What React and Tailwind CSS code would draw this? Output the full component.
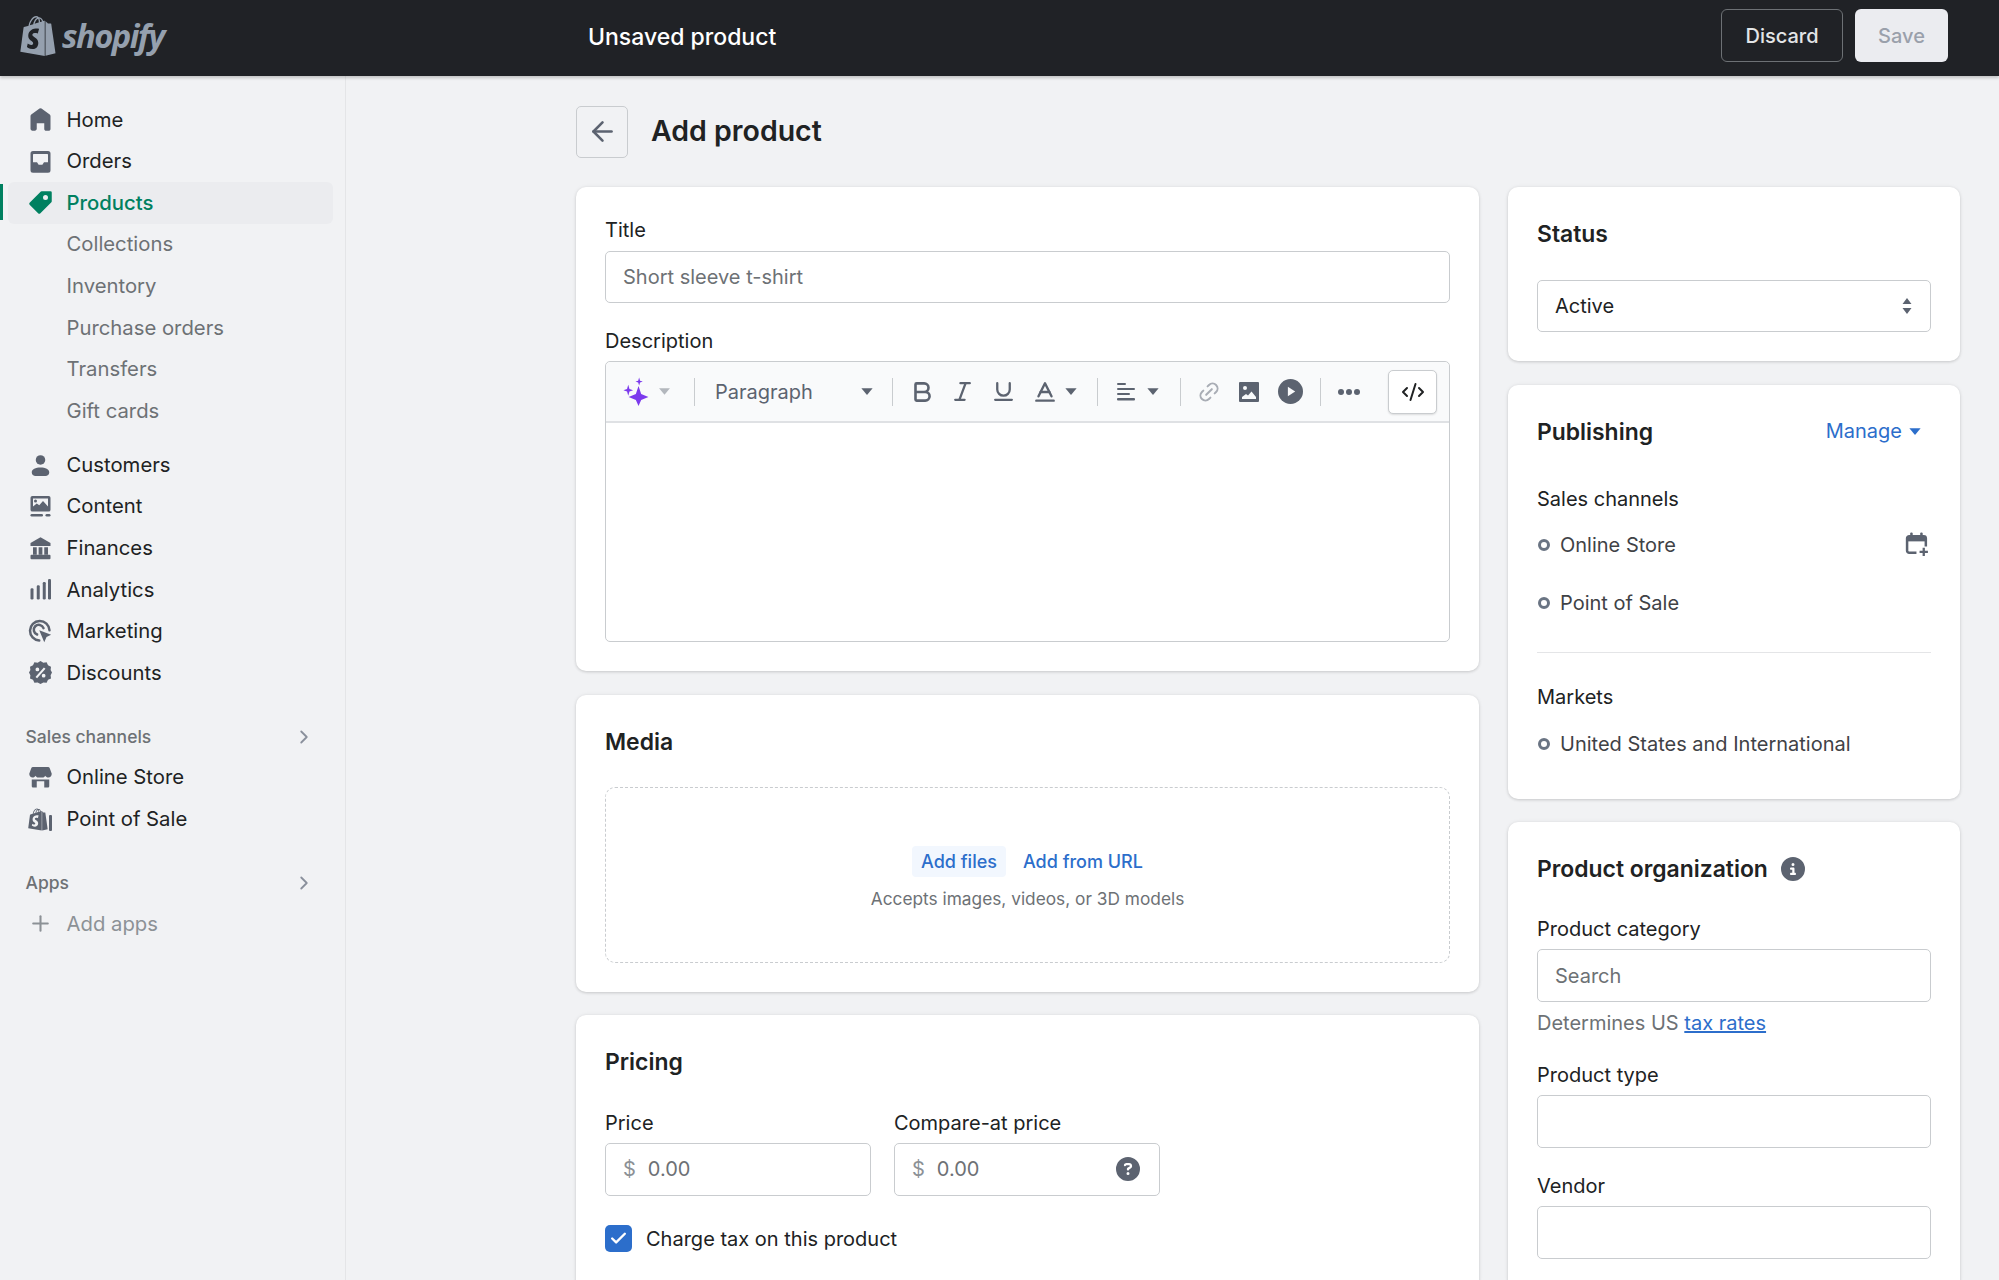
import { ArrowLeft, Bold, ChevronRight, Italic, Link2, Underline, Baseline, CodeXml, Plus, Check } from "lucide-react";
import { FaShopify } from "react-icons/fa";
import { FaCircleInfo, FaCircleQuestion } from "react-icons/fa6";

const ICON = "w-[25px] h-[25px] shrink-0";

function HomeIcon({ className }) {
    return <svg viewBox="0 0 20 20" fill="currentColor" className={className}><path d="M18 7.261V17.5c0 .841-.672 1.5-1.5 1.5h-2c-.828 0-1.5-.659-1.5-1.5V13H7v4.477C7 18.318 6.328 19 5.5 19h-2c-.828 0-1.5-.682-1.5-1.523V7.261a1.5 1.5 0 0 1 .615-1.21l6.59-4.82a1.481 1.481 0 0 1 1.59 0l6.59 4.82A1.5 1.5 0 0 1 18 7.26z" /></svg>;
}

function OrdersIcon({ className }) {
    return <svg viewBox="0 0 20 20" fill="currentColor" className={className}><path fillRule="evenodd" d="M4 1.500h12a2 2 0 0 1 2 2V17a2 2 0 0 1-2 2H4a2 2 0 0 1-2-2V3.500a2 2 0 0 1 2-2zm.500 2.500a.500.500 0 0 0-.500.500v6h3.200l1.300 2h3l1.300-2H16v-6a.500.500 0 0 0-.500-.500h-11z" /></svg>;
}

function TagIcon({ className }) {
    return <svg viewBox="0 0 20 20" fill="currentColor" className={className}><path d="M11 1h7a1 1 0 0 1 1 1v7a1 1 0 0 1-.293.707l-9 9a1 1 0 0 1-1.414 0l-7-7a1 1 0 0 1 0-1.414l9-9A1 1 0 0 1 11 1zm3 7a2 2 0 1 0 0-4 2 2 0 0 0 0 4z" /></svg>;
}

function CustomerIcon({ className }) {
    return <svg viewBox="0 0 20 20" fill="currentColor" className={className}><circle cx="10" cy="5.500" r="3.800" /><path d="M3 15.500c0-2.600 3-4 7-4s7 1.400 7 4c0 1.800-1.400 2.800-3 2.800H6c-1.600 0-3-1-3-2.800z" /></svg>;
}

function ContentIcon({ className }) {
    return <svg viewBox="0 0 20 20" fill="currentColor" className={className}><path fillRule="evenodd" d="M3.500 1.500h13A1.500 1.500 0 0 1 18 3v9.500a1.500 1.500 0 0 1-1.500 1.500h-13A1.500 1.500 0 0 1 2 12.500V3a1.500 1.500 0 0 1 1.500-1.500zM4 3.500V10l3-2.500 2 1.500 3-3.500 4 4.500V3.500H4zm2 .8a1.200 1.200 0 1 1 0 2.400 1.200 1.200 0 0 1 0-2.400z" /><rect x="2" y="16" width="10" height="2" rx="1" /><rect x="14" y="16" width="4" height="2" rx="1" /></svg>;
}

function BankIcon({ className }) {
    return <svg viewBox="0 0 20 20" fill="currentColor" className={className}><path d="M10 1 18 5.500V8H2V5.500L10 1z" /><path d="M4 9h3v6H4zM8.500 9h3v6h-3zM13 9h3v6h-3z" /><rect x="2" y="15" width="16" height="3.500" rx=".8" /></svg>;
}

function AnalyticsIcon({ className }) {
    return <svg viewBox="0 0 20 20" fill="currentColor" className={className}><rect x="2" y="9" width="2.400" height="9" rx="1" /><rect x="7" y="6.500" width="2.400" height="11.500" rx="1" /><rect x="11.800" y="4" width="2.400" height="14" rx="1" /><rect x="16" y="1.500" width="2.400" height="16.500" rx="1" /></svg>;
}

function MarketingIcon({ className }) {
    return <svg viewBox="0 0 20 20" fill="none" className={className}><path d="M9 17.200A7.800 7.800 0 1 1 17.200 9" stroke="currentColor" strokeWidth="2" strokeLinecap="round" /><path d="M7.300 12.400a4 4 0 1 1 5.100-5.100" stroke="currentColor" strokeWidth="2" strokeLinecap="round" /><path d="M9 9l9.500 3.500-3.700 1.800-1.800 4.200L9 9z" fill="currentColor" /></svg>;
}

function DiscountIcon({ className }) {
    return <svg viewBox="0 0 20 20" fill="currentColor" className={className}><path fillRule="evenodd" d="M10 .8l2.300 1.300 2.600-.3 1.100 2.400 2.400 1.100-.3 2.600L19.200 10l-1.100 2.100.3 2.600-2.400 1.100-1.100 2.400-2.600-.3L10 19.200l-2.300-1.300-2.600.3L4 15.800l-2.400-1.100.3-2.600L.8 10l1.100-2.100-.3-2.600L4 4.200l1.100-2.400 2.600.3L10 .8zM7.500 6a1.500 1.500 0 1 0 0 3 1.500 1.500 0 0 0 0-3zm5 5a1.500 1.500 0 1 0 0 3 1.500 1.500 0 0 0 0-3zm.2-5L6 13.500 7.300 14.500 14 7l-1.300-1z" /></svg>;
}

function StoreIcon({ className }) {
    return <svg viewBox="0 0 20 20" fill="currentColor" className={className}><path d="M4 1.500h12a1.500 1.500 0 0 1 1.400 1L19 7c0 1.800-1.200 3-2.700 3-1 0-2-.6-2.500-1.500-.5.900-1.300 1.500-2 1.500H8c-.7 0-1.500-.6-2-1.500C5.500 9.400 4.700 10 3.700 10 2.200 10 1 8.800 1 7l1.600-4.500a1.500 1.500 0 0 1 1.400-1z" /><path d="M3 11.500h14V17a1 1 0 0 1-1 1h-3v-5H7v5H4a1 1 0 0 1-1-1v-5.500z" /></svg>;
}

function PosIcon({ className }) {
    return (
        <span className={`${className} relative block`}>
            <FaShopify className="absolute left-0 top-0 w-[20px] h-[25px]" />
            <span className="absolute right-[1px] top-[8px] w-[3px] h-[16px] bg-[#5c6370] rounded-[1px]" />
        </span>
    );
}

function Caret({ className }) {
    return <svg viewBox="0 0 12 8" fill="currentColor" className={className}><path d="M1 1h10L6 7z" /></svg>;
}

function ImageIcon() {
    return <svg viewBox="0 0 22 22" fill="currentColor" className="w-[22px] h-[22px]"><path fillRule="evenodd" d="M2 1h18a1 1 0 0 1 1 1v18a1 1 0 0 1-1 1H2a1 1 0 0 1-1-1V2a1 1 0 0 1 1-1zm5 4a2 2 0 1 0 0 4 2 2 0 0 0 0-4zM4 18h14v-2l-4.500-5.500-3.500 4-2-1.500L4 16v2z" /></svg>;
}

function VideoIcon() {
    return <svg viewBox="0 0 24 24" className="w-[25px] h-[25px]"><circle cx="12" cy="12" r="12" fill="currentColor" /><path d="M9.500 7.500l7 4.500-7 4.500z" fill="#f9fafb" /></svg>;
}

function AlignIcon() {
    return <svg viewBox="0 0 22 22" fill="currentColor" className="w-[22px] h-[22px]"><rect x="2" y="2" width="9" height="2" rx="1" /><rect x="2" y="7" width="18" height="2" rx="1" /><rect x="2" y="12" width="13" height="2" rx="1" /><rect x="2" y="17" width="18" height="2.500" rx="1" /></svg>;
}

function SparkIcon() {
    return (
        <svg viewBox="0 0 24 24" fill="#7c3aed" className="w-[29px] h-[29px]">
            <path d="M14.500 7.500 16.700 14l6 2.500-6 2.500-2.200 5-2.200-5-6-2.500 6-2.500z" />
            <path d="M6 6.500 7 10l3 1-3 1-1 3.500L5 12l-3-1 3-1z" />
            <path d="M15 .5 15.800 3l2.200.8-2.200.8-.8 2.400-.8-2.400-2.200-.8 2.200-.8z" />
        </svg>
    );
}

function CalendarIcon() {
    return (
        <svg viewBox="0 0 24 24" fill="none" className="w-[25px] h-[25px] text-[#5c6370]">
            <path d="M11 20H4a2 2 0 0 1-2-2V6a2 2 0 0 1 2-2h14a2 2 0 0 1 2 2v8" stroke="currentColor" strokeWidth="2.400" />
            <path d="M2 4h18v5H2z" fill="currentColor" />
            <rect x="5" y="0.500" width="2.400" height="5" rx="1" fill="currentColor" />
            <rect x="14.600" y="0.500" width="2.400" height="5" rx="1" fill="currentColor" />
            <path d="M18 15v8M14 19h8" stroke="currentColor" strokeWidth="2.200" />
        </svg>
    );
}

const mainNav = [
    { label: "Customers", Icon: CustomerIcon },
    { label: "Content", Icon: ContentIcon },
    { label: "Finances", Icon: BankIcon },
    { label: "Analytics", Icon: AnalyticsIcon },
    { label: "Marketing", Icon: MarketingIcon },
    { label: "Discounts", Icon: DiscountIcon }
];

const subNav = ["Collections", "Inventory", "Purchase orders", "Transfers", "Gift cards"];

function NavRow({ label, Icon }) {
    return (
        <div className="h-[41.600px] mx-2 pl-5 flex items-center gap-[13.500px] text-[20.300px] text-[#202223]">
            <Icon className={`${ICON} text-[#5c6370]`} />
            {label}
        </div>
    );
}

function SectionHead({ label }) {
    return (
        <div className="h-[40px] mt-[23px] pl-[25.500px] pr-[30px] flex items-center justify-between text-[17.500px] font-medium text-[#6d7175]">
            {label}
            <ChevronRight className="w-[22px] h-[22px] text-[#8a909c]" strokeWidth={2} />
        </div>
    );
}

function Sidebar() {
    return (
        <aside className="w-[346px] shrink-0 border-r border-[#e4e5e7] pt-[23px] bg-[#f1f2f4]">
            <NavRow label="Home" Icon={HomeIcon} />
            <NavRow label="Orders" Icon={OrdersIcon} />
            <div className="relative h-[41.600px] ml-2 mr-[12px] pl-5 flex items-center gap-[13.500px] text-[20.300px] font-medium text-[#008060] bg-[#ebecef] rounded-[6px]">
                <span className="absolute -left-2 top-[2px] w-[3px] h-[36px] bg-[#008060]" />
                <TagIcon className={ICON} />
                Products
            </div>
            {subNav.map(item => (
                <div key={item} className="h-[41.700px] pl-[66.500px] flex items-center text-[20.300px] text-[#6d7175]">
                    {item}
                </div>
            ))}
            <div className="mt-[12px]">
                {mainNav.map(item => <NavRow key={item.label} label={item.label} Icon={item.Icon} />)}
            </div>
            <SectionHead label="Sales channels" />
            <NavRow label="Online Store" Icon={StoreIcon} />
            <NavRow label="Point of Sale" Icon={PosIcon} />
            <SectionHead label="Apps" />
            <div className="h-[41.600px] mx-2 pl-5 flex items-center gap-[13.500px] text-[20.300px] text-[#8c9196]">
                <Plus className={`${ICON} text-[#8c9196]`} strokeWidth={2} />
                Add apps
            </div>
        </aside>
    );
}

function Card({ className, children }) {
    return (
        <section className={`bg-white rounded-[10px] px-[29px] shadow-[0_0_5px_rgba(23,24,24,0.05),0_1px_3px_rgba(0,0,0,0.15)] ${className}`}>
            {children}
        </section>
    );
}

function CardTitle({ children }) {
    return <h2 className="text-[22.900px] leading-[30px] font-semibold text-[#202223]">{children}</h2>;
}

function Label({ children, className = "" }) {
    return <div className={`text-[20px] leading-[26px] text-[#202223] ${className}`}>{children}</div>;
}

function TextBox({ placeholder, className = "" }) {
    return (
        <input
            placeholder={placeholder}
            className={`block w-full h-[53px] px-[17px] mt-[7px] text-[20px] border border-[#c9cccf] rounded-[5px] bg-white placeholder:text-[#6d7175] ${className}`}
        />
    );
}

function Divider({ className }) {
    return <span className={`w-px h-[28px] bg-[#c9cccf] shrink-0 ${className}`} />;
}

function Toolbar() {
    return (
        <div className="h-[61px] pl-[15px] flex items-center bg-[#f9fafb] border-b-2 border-[#dfe1e4] text-[#5c6370] rounded-t-[5px]">
            <SparkIcon />
            <Caret className="w-[13px] h-[9px] ml-[8px] text-[#b3b7bd]" />
            <Divider className="ml-[23px]" />
            <span className="w-[145px] ml-[20px] text-[20px] text-[#5c6370]">Paragraph</span>
            <Caret className="w-[14px] h-[9px] text-[#5c6370]" />
            <Divider className="ml-[18px]" />
            <Bold className="w-[26px] h-[26px] ml-[16px]" strokeWidth={2.400} />
            <Italic className="w-[25px] h-[25px] ml-[15px]" strokeWidth={2.200} />
            <Underline className="w-[25px] h-[25px] ml-[16px]" strokeWidth={2.200} />
            <Baseline className="w-[26px] h-[26px] ml-[16px]" strokeWidth={2.200} />
            <Caret className="w-[14px] h-[9px] ml-[6px]" />
            <Divider className="ml-[19px]" />
            <span className="ml-[17px]"><AlignIcon /></span>
            <Caret className="w-[14px] h-[9px] ml-[9px]" />
            <Divider className="ml-[20px]" />
            <Link2 className="w-[24px] h-[24px] ml-[16px] -rotate-45 text-[#a9adb5]" strokeWidth={2} />
            <span className="ml-[17px]"><ImageIcon /></span>
            <span className="ml-[18px]"><VideoIcon /></span>
            <Divider className="ml-[17px]" />
            <span className="ml-[17px] w-[22px] flex justify-between">
                <span className="w-[6px] h-[6px] rounded-full bg-[#5c6370]" />
                <span className="w-[6px] h-[6px] rounded-full bg-[#5c6370]" />
                <span className="w-[6px] h-[6px] rounded-full bg-[#5c6370]" />
            </span>
            <button className="ml-[28px] w-[49px] h-[44px] flex items-center justify-center bg-white border border-[#c9cccf] rounded-[5px] shadow-[0_1px_2px_rgba(0,0,0,0.12)] text-[#202223]">
                <CodeXml className="w-[24px] h-[24px]" strokeWidth={2} />
            </button>
        </div>
    );
}

function ProductCard() {
    return (
        <Card className="pt-[30px] pb-[29px]">
            <Label>Title</Label>
            <TextBox placeholder="Short sleeve t-shirt" className="!mt-2 !h-[52px]" />
            <Label className="mt-[25px]">Description</Label>
            <div className="mt-[7px] h-[281px] border border-[#c9cccf] rounded-[5px]">
                <Toolbar />
            </div>
        </Card>
    );
}

function MediaCard() {
    return (
        <Card className="pt-[32px] pb-[29px]">
            <CardTitle>Media</CardTitle>
            <div className="mt-[30px] h-[176px] pt-[58px] flex flex-col items-center border border-dashed border-[#c9cccf] rounded-[10px]">
                <div className="flex items-center gap-[17px]">
                    <span className="h-[31px] px-[9px] flex items-center bg-[#f2f7fe] rounded-[4px] text-[18px] font-medium text-[#2c6ecb]">Add files</span>
                    <span className="text-[18px] font-medium text-[#2c6ecb]">Add from URL</span>
                </div>
                <p className="mt-[9px] text-[17.300px] text-[#6d7175]">Accepts images, videos, or 3D models</p>
            </div>
        </Card>
    );
}

function PriceBox({ help }) {
    return (
        <div className="w-[266px] h-[52.500px] px-[17px] flex items-center border border-[#c9cccf] rounded-[5px] text-[20px] text-[#6d7175]">
            <span className="text-[#8c9196] mr-[12px]">$</span>
            <span>0.00</span>
            {help && <FaCircleQuestion className="w-[24px] h-[24px] ml-auto mr-[2px] text-[#5c6370]" />}
        </div>
    );
}

function PricingCard() {
    return (
        <Card className="pt-[32px] pb-[30px] flex-1">
            <CardTitle>Pricing</CardTitle>
            <div className="mt-[33px] flex gap-[23px]">
                <div>
                    <Label className="mb-[7px]">Price</Label>
                    <PriceBox />
                </div>
                <div>
                    <Label className="mb-[7px]">Compare-at price</Label>
                    <PriceBox help />
                </div>
            </div>
            <div className="mt-[28px] flex items-center gap-[14px] text-[20px] text-[#202223]">
                <span className="w-[27px] h-[27px] flex items-center justify-center rounded-[5px] bg-[#2c6ecb]">
                    <Check className="w-[19px] h-[19px] text-white" strokeWidth={3} />
                </span>
                Charge tax on this product
            </div>
        </Card>
    );
}

function StatusCard() {
    return (
        <Card className="pt-[32px] pb-[29px]">
            <CardTitle>Status</CardTitle>
            <div className="mt-[31px] h-[52px] px-[17px] flex items-center justify-between border border-[#c9cccf] rounded-[5px] text-[20px] text-[#202223]">
                Active
                <svg viewBox="0 0 10 16" fill="#5c6370" className="w-[10px] h-[16px] mr-[1px]">
                    <path d="M5 0l4.500 6h-9zM5 16 .5 10h9z" />
                </svg>
            </div>
        </Card>
    );
}

function ChannelRow({ label, children, className = "" }) {
    return (
        <div className={`h-[26px] flex items-center text-[20px] text-[#202223] ${className}`}>
            <span className="w-[12px] h-[12px] rounded-full border-[3px] border-[#6a7483] mr-[10px] ml-px" />
            <span className="text-[#3f4246]">{label}</span>
            {children}
        </div>
    );
}

function PublishingCard() {
    return (
        <Card className="pt-[32px] pb-[42px]">
            <div className="flex items-center justify-between">
                <CardTitle>Publishing</CardTitle>
                <div className="flex items-center gap-[6px] mr-[9px] -mt-px text-[20px] text-[#2c6ecb]">
                    Manage
                    <Caret className="w-[14px] h-[9px] text-[#2c6ecb]" />
                </div>
            </div>
            <Label className="mt-[39px]">Sales channels</Label>
            <ChannelRow label="Online Store" className="mt-[20px]">
                <span className="ml-auto mr-px"><CalendarIcon /></span>
            </ChannelRow>
            <ChannelRow label="Point of Sale" className="mt-[32px]" />
            <div className="mt-[36px] border-t border-[#e4e5e7]" />
            <Label className="mt-[31px]">Markets</Label>
            <ChannelRow label="United States and International" className="mt-[21px]" />
        </Card>
    );
}

function OrganizationCard() {
    return (
        <Card className="pt-[32px] pb-[30px] flex-1">
            <div className="flex items-center gap-[13px]">
                <CardTitle>Product organization</CardTitle>
                <FaCircleInfo className="w-[24px] h-[24px] text-[#5c6370]" />
            </div>
            <Label className="mt-[32px]">Product category</Label>
            <TextBox placeholder="Search" />
            <p className="mt-[8px] text-[20px] leading-[26px] text-[#6d7175]">
                Determines US <a className="text-[#2c6ecb] underline">tax rates</a>
            </p>
            <Label className="mt-[26px]">Product type</Label>
            <TextBox />
            <Label className="mt-[25px]">Vendor</Label>
            <TextBox />
        </Card>
    );
}

export default function App() {
    return (
        <div className="h-screen overflow-hidden flex flex-col bg-[#f1f2f4] font-['Inter',sans-serif]">
            <header className="h-[76px] shrink-0 bg-[#202226] flex items-center pl-[20px] pr-[51px] pb-[5px] shadow-[0_2px_3px_rgba(0,0,0,0.2)] z-10">
                <FaShopify className="w-[36px] h-[42px] text-[#95a0ae]" />
                <span className="ml-[6px] w-[110px] font-['Open_Sans',sans-serif] text-[32.800px] font-bold italic tracking-[-1.600px] text-[#95a0ae]">shopify</span>
                <span className="ml-[416px] mt-[3px] text-[23px] font-medium text-white">Unsaved product</span>
                <button className="ml-auto w-[122px] h-[53px] border border-[#6d7175] rounded-[6px] text-[20px] font-medium text-[#e3e5e7]">Discard</button>
                <button className="ml-[12px] w-[93px] h-[53px] bg-[#ebecf0] rounded-[6px] text-[20px] font-medium text-[#9aa0ab]">Save</button>
            </header>
            <div className="flex-1 flex min-h-0">
                <Sidebar />
                <main className="flex-1 min-w-0 pl-[230px] pr-[39px]">
                    <div className="h-[111px] flex items-center gap-[23px]">
                        <button className="w-[52px] h-[52px] flex items-center justify-center border border-[#c9cccf] rounded-[5px]">
                            <ArrowLeft className="w-[31px] h-[31px] text-[#5c6370]" strokeWidth={2} />
                        </button>
                        <h1 className="text-[28.500px] font-semibold text-[#202223]">Add product</h1>
                    </div>
                    <div className="flex gap-[29px]">
                        <div className="w-[903px] flex flex-col gap-[23.500px]">
                            <ProductCard />
                            <MediaCard />
                            <PricingCard />
                        </div>
                        <div className="w-[452px] flex flex-col gap-[23.500px]">
                            <StatusCard />
                            <PublishingCard />
                            <OrganizationCard />
                        </div>
                    </div>
                </main>
            </div>
        </div>
    );
}
